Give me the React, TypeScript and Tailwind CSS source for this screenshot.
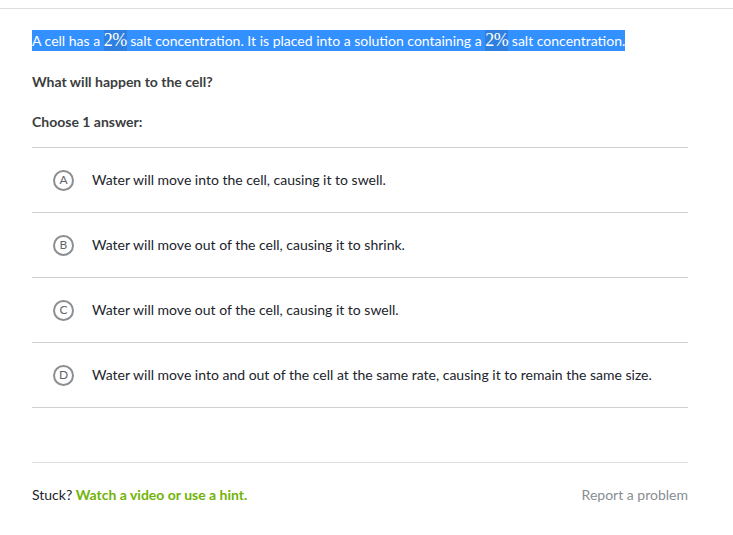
const options = [
  { letter: "A", text: "Water will move into the cell, causing it to swell." },
  { letter: "B", text: "Water will move out of the cell, causing it to shrink." },
  { letter: "C", text: "Water will move out of the cell, causing it to swell." },
  {
    letter: "D",
    text: "Water will move into and out of the cell at the same rate, causing it to remain the same size.",
  },
];

function Pct() {
  return (
    <span className="inline-block bg-[#2f7fe0] font-['Liberation_Serif',serif] text-[18px] tracking-[-0.5px]">
      2%
    </span>
  );
}

export default function App() {
  return (
    <div className="min-h-screen bg-white font-['Lato',sans-serif] text-[14px] text-[#21242c]">
      <div className="h-[9px] border-b border-[#dddddd]" />
      <div className="ml-[32px] w-[656px]">
        <div className="pt-[21px]">
          <span className="inline-block bg-[#3390ff] leading-[21px] text-white">
            A cell has a <Pct /> salt concentration. It is placed into a solution containing a <Pct /> salt
            concentration.
          </span>
        </div>
        <p className="mt-[21px] font-bold leading-[20px] text-[#3b3e40]">What will happen to the cell?</p>
        <p className="mt-[20px] font-bold leading-[20px] text-[#3b3e40]">Choose 1 answer:</p>
        <ul className="mt-[15px] border-t border-[#cfcfcf]">
          {options.map((o) => (
            <li key={o.letter} className="flex h-[65px] items-center border-b border-[#cfcfcf]">
              <span className="ml-[21px] flex h-[21px] w-[21px] items-center justify-center rounded-full border-2 border-[#8c8e91] text-[12px] text-[#626569]">
                {o.letter}
              </span>
              <span className="ml-[18px] pb-[1px]">{o.text}</span>
            </li>
          ))}
        </ul>
        <div className="mt-[54px] flex h-[65px] items-center justify-between border-t border-[#dddddd] pb-[2px]">
          <p>
            Stuck? <span className="font-bold text-[#71b307]">Watch a video or use a hint.</span>
          </p>
          <span className="text-[#888d93]">Report a problem</span>
        </div>
      </div>
    </div>
  );
}
